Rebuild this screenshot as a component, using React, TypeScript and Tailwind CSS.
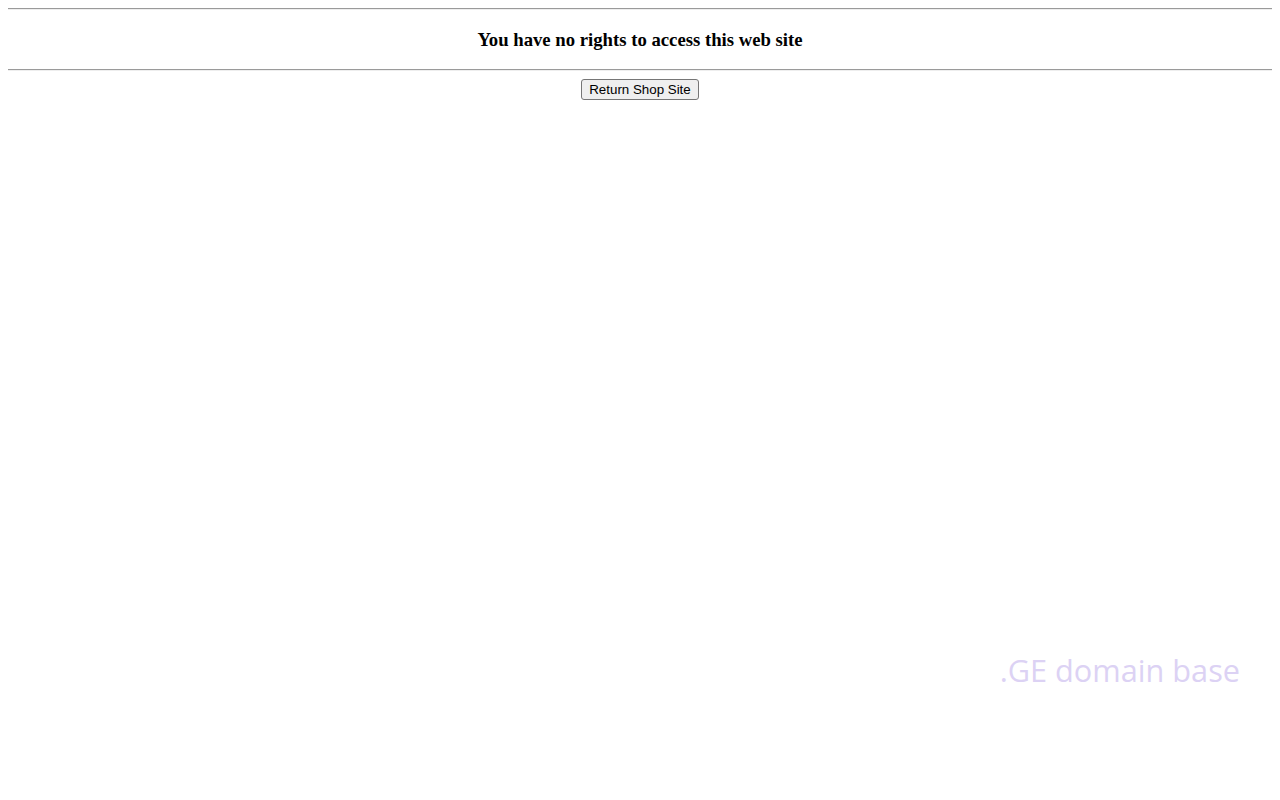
export default function App() {
  return (
    <div className="relative w-full h-[800px] bg-white px-2 pt-2" style={{ fontFamily: '"Liberation Serif", "Times New Roman", serif' }}>
      <div className="h-[2px] border-t border-b border-t-[#9a9a9a] border-b-[#eeeeee]" />
      <h3 className="mt-[18.72px] mb-[18.72px] text-center font-bold text-[18.72px] leading-[21.5px] text-black">
        You have no rights to access this web site
      </h3>
      <div className="h-[2px] border-t border-b border-t-[#9a9a9a] border-b-[#eeeeee]" />
      <div className="mt-[6px] text-center">
        <button
          className="inline-block h-[21px] px-[7px] text-[13.33px] leading-[15px] text-black bg-[#efefef] border border-[#767676] rounded-[3px]"
          style={{ fontFamily: '"Liberation Sans", Arial, sans-serif' }}
        >
          Return Shop Site
        </button>
      </div>
      <div
        className="absolute right-[40px] top-[649px] text-[30.7px] leading-[42px] text-[#dcd2f4]"
        style={{ fontFamily: '"Open Sans", "Noto Sans", sans-serif' }}
      >
        .GE domain base
      </div>
    </div>
  );
}
